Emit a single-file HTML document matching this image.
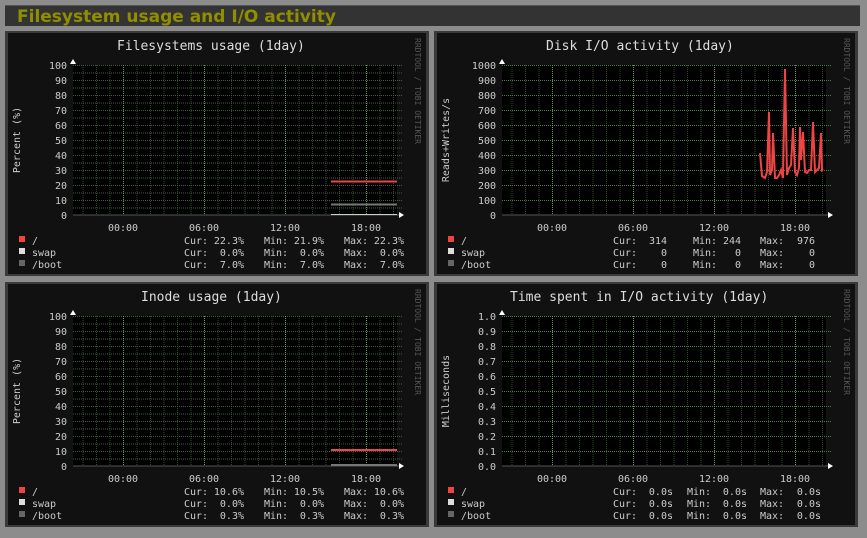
<!DOCTYPE html>
<html><head><meta charset="utf-8"><style>
html,body{margin:0;padding:0;background:#8c8c8c;}
svg{display:block;font-family:"DejaVu Sans Mono","Liberation Mono",monospace;}
</style></head><body>
<svg width="867" height="538" viewBox="0 0 867 538" xmlns="http://www.w3.org/2000/svg">
<defs>
<pattern id="vmin" patternUnits="userSpaceOnUse" x="118" y="0" width="13.5" height="2">
<rect x="0" y="0" width="1" height="1" fill="#2f4a2f"/></pattern>
<pattern id="h75" patternUnits="userSpaceOnUse" x="0" y="34" width="2" height="7.5">
<rect x="0" y="0" width="1" height="1" fill="#3f5f3f"/></pattern>
<pattern id="h15" patternUnits="userSpaceOnUse" x="0" y="34" width="2" height="15">
<rect x="0" y="0" width="1" height="1" fill="#4f7a4f"/></pattern>
<pattern id="vmaj" patternUnits="userSpaceOnUse" x="118" y="0" width="81" height="2">
<rect x="0" y="0" width="1" height="1" fill="#6a9a6a"/></pattern>
</defs>
<rect x="5" y="5" width="855" height="21" fill="#333"/>
<rect x="5" y="5" width="855" height="1" fill="#555"/>
<text x="17" y="22" font-family="'DejaVu Sans','Liberation Sans',sans-serif" font-weight="bold" font-size="17" fill="#8f8f00">Filesystem usage and I/O activity</text>

<!-- Panel 1 -->
<g transform="translate(5,31)">
<rect x="0" y="0" width="424" height="245" fill="#3a3a3a"/>
<rect x="3" y="2" width="418" height="241" fill="#111"/>
<rect x="68" y="34" width="324" height="150" fill="#000"/>
<rect x="68" y="34" width="330" height="150" fill="url(#vmin)"/>
<rect x="68" y="34" width="330" height="150" fill="url(#h75)"/>
<rect x="68" y="34" width="330" height="150" fill="url(#vmaj)"/>
<line x1="68" y1="184" x2="396" y2="184" stroke="#555"/>
<polygon points="65,33 71,33 68,28" fill="#fff"/><polygon points="394,181 394,187 399,184" fill="#fff"/>
<text x="112" y="19" font-size="13" fill="#ddd">Filesystems usage  (1day)</text>
<g font-size="10" fill="#ccc" text-anchor="end">
<text x="62" y="38">100</text><text x="62" y="53">90</text><text x="62" y="68">80</text><text x="62" y="83">70</text><text x="62" y="98">60</text><text x="62" y="113">50</text><text x="62" y="128">40</text><text x="62" y="143">30</text><text x="62" y="158">20</text><text x="62" y="173">10</text><text x="62" y="188">0</text></g>
<g font-size="10" fill="#ccc" text-anchor="middle"><text x="118" y="200">00:00</text><text x="199" y="200">06:00</text><text x="280" y="200">12:00</text><text x="361" y="200">18:00</text></g>
<text transform="translate(15,109) rotate(-90)" font-size="10" fill="#ccc" text-anchor="middle">Percent (%)</text>
<text transform="translate(410,7) rotate(90)" font-size="8" fill="#555">RRDTOOL / TOBI OETIKER</text>
<line x1="326" y1="150.5" x2="392" y2="150.5" stroke="#e44" stroke-width="2"/>
<line x1="326" y1="173.5" x2="392" y2="173.5" stroke="#777" stroke-width="2"/>
<line x1="326" y1="183.5" x2="392" y2="183.5" stroke="#ccc" stroke-width="1"/>
<rect x="14" y="205" width="6" height="6" fill="#e44"/><rect x="14" y="217" width="6" height="6" fill="#ddd"/><rect x="14" y="229" width="6" height="6" fill="#666"/>
<g font-size="10" fill="#ccc">
<text x="27" y="213">/</text><text x="27" y="225">swap</text><text x="27" y="237">/boot</text>
<text x="179" y="213">Cur:</text><text x="259" y="213">Min:</text><text x="339" y="213">Max:</text>
<text x="179" y="225">Cur:</text><text x="259" y="225">Min:</text><text x="339" y="225">Max:</text>
<text x="179" y="237">Cur:</text><text x="259" y="237">Min:</text><text x="339" y="237">Max:</text>
<g text-anchor="end"><text x="239" y="213">22.3%</text><text x="319" y="213">21.9%</text><text x="399" y="213">22.3%</text>
<text x="239" y="225">0.0%</text><text x="319" y="225">0.0%</text><text x="399" y="225">0.0%</text>
<text x="239" y="237">7.0%</text><text x="319" y="237">7.0%</text><text x="399" y="237">7.0%</text></g></g>
</g>

<!-- Panel 2 -->
<g transform="translate(434,31)">
<rect x="0" y="0" width="424" height="245" fill="#3a3a3a"/>
<rect x="3" y="2" width="418" height="241" fill="#111"/>
<rect x="68" y="34" width="324" height="150" fill="#000"/>
<rect x="68" y="34" width="330" height="150" fill="url(#vmin)"/>
<rect x="68" y="34" width="330" height="150" fill="url(#h15)"/>
<rect x="68" y="34" width="330" height="150" fill="url(#vmaj)"/>
<line x1="68" y1="184" x2="396" y2="184" stroke="#555"/>
<polygon points="65,33 71,33 68,28" fill="#fff"/><polygon points="394,181 394,187 399,184" fill="#fff"/>
<text x="112" y="19" font-size="13" fill="#ddd">Disk I/O activity  (1day)</text>
<g font-size="10" fill="#ccc" text-anchor="end">
<text x="62" y="38">1000</text><text x="62" y="53">900</text><text x="62" y="68">800</text><text x="62" y="83">700</text><text x="62" y="98">600</text><text x="62" y="113">500</text><text x="62" y="128">400</text><text x="62" y="143">300</text><text x="62" y="158">200</text><text x="62" y="173">100</text><text x="62" y="188">0</text></g>
<g font-size="10" fill="#ccc" text-anchor="middle"><text x="118" y="200">00:00</text><text x="199" y="200">06:00</text><text x="280" y="200">12:00</text><text x="361" y="200">18:00</text></g>
<text transform="translate(15,109) rotate(-90)" font-size="10" fill="#ccc" text-anchor="middle">Reads+Writes/s</text>
<text transform="translate(410,7) rotate(90)" font-size="8" fill="#555">RRDTOOL / TOBI OETIKER</text>
<polyline fill="none" stroke="#e44" stroke-width="2" points="326,122 328,145 331,147 333,141 335,81 336,144 338,139 339,102 341,147 343,147 345,144 347,139 349,147 351,38 353,144 355,137 357,134 359,97 361,141 363,144 365,137 366,96 367,129 369,101 371,141 373,142 375,139 377,139 379,91 381,141 383,139 385,137 387,102 388,139 389,138"/>
<rect x="14" y="205" width="6" height="6" fill="#e44"/><rect x="14" y="217" width="6" height="6" fill="#ddd"/><rect x="14" y="229" width="6" height="6" fill="#666"/>
<g font-size="10" fill="#ccc">
<text x="27" y="213">/</text><text x="27" y="225">swap</text><text x="27" y="237">/boot</text>
<text x="179" y="213">Cur:</text><text x="259" y="213">Min:</text><text x="326" y="213">Max:</text>
<text x="179" y="225">Cur:</text><text x="259" y="225">Min:</text><text x="326" y="225">Max:</text>
<text x="179" y="237">Cur:</text><text x="259" y="237">Min:</text><text x="326" y="237">Max:</text>
<g text-anchor="end"><text x="233" y="213">314</text><text x="307" y="213">244</text><text x="381" y="213">976</text>
<text x="233" y="225">0</text><text x="307" y="225">0</text><text x="381" y="225">0</text>
<text x="233" y="237">0</text><text x="307" y="237">0</text><text x="381" y="237">0</text></g></g>
</g>

<!-- Panel 3 -->
<g transform="translate(5,282)">
<rect x="0" y="0" width="424" height="245" fill="#3a3a3a"/>
<rect x="3" y="2" width="418" height="241" fill="#111"/>
<rect x="68" y="34" width="324" height="150" fill="#000"/>
<rect x="68" y="34" width="330" height="150" fill="url(#vmin)"/>
<rect x="68" y="34" width="330" height="150" fill="url(#h75)"/>
<rect x="68" y="34" width="330" height="150" fill="url(#vmaj)"/>
<line x1="68" y1="184" x2="396" y2="184" stroke="#555"/>
<polygon points="65,33 71,33 68,28" fill="#fff"/><polygon points="394,181 394,187 399,184" fill="#fff"/>
<text x="136" y="19" font-size="13" fill="#ddd">Inode usage  (1day)</text>
<g font-size="10" fill="#ccc" text-anchor="end">
<text x="62" y="38">100</text><text x="62" y="53">90</text><text x="62" y="68">80</text><text x="62" y="83">70</text><text x="62" y="98">60</text><text x="62" y="113">50</text><text x="62" y="128">40</text><text x="62" y="143">30</text><text x="62" y="158">20</text><text x="62" y="173">10</text><text x="62" y="188">0</text></g>
<g font-size="10" fill="#ccc" text-anchor="middle"><text x="118" y="200">00:00</text><text x="199" y="200">06:00</text><text x="280" y="200">12:00</text><text x="361" y="200">18:00</text></g>
<text transform="translate(15,109) rotate(-90)" font-size="10" fill="#ccc" text-anchor="middle">Percent (%)</text>
<text transform="translate(410,7) rotate(90)" font-size="8" fill="#555">RRDTOOL / TOBI OETIKER</text>
<line x1="326" y1="168" x2="392" y2="168" stroke="#e44" stroke-width="2"/>
<line x1="326" y1="183" x2="392" y2="183" stroke="#777" stroke-width="2"/>
<rect x="14" y="205" width="6" height="6" fill="#e44"/><rect x="14" y="217" width="6" height="6" fill="#ddd"/><rect x="14" y="229" width="6" height="6" fill="#666"/>
<g font-size="10" fill="#ccc">
<text x="27" y="213">/</text><text x="27" y="225">swap</text><text x="27" y="237">/boot</text>
<text x="179" y="213">Cur:</text><text x="259" y="213">Min:</text><text x="339" y="213">Max:</text>
<text x="179" y="225">Cur:</text><text x="259" y="225">Min:</text><text x="339" y="225">Max:</text>
<text x="179" y="237">Cur:</text><text x="259" y="237">Min:</text><text x="339" y="237">Max:</text>
<g text-anchor="end"><text x="239" y="213">10.6%</text><text x="319" y="213">10.5%</text><text x="399" y="213">10.6%</text>
<text x="239" y="225">0.0%</text><text x="319" y="225">0.0%</text><text x="399" y="225">0.0%</text>
<text x="239" y="237">0.3%</text><text x="319" y="237">0.3%</text><text x="399" y="237">0.3%</text></g></g>
</g>

<!-- Panel 4 -->
<g transform="translate(434,282)">
<rect x="0" y="0" width="424" height="245" fill="#3a3a3a"/>
<rect x="3" y="2" width="418" height="241" fill="#111"/>
<rect x="68" y="34" width="324" height="150" fill="#000"/>
<rect x="68" y="34" width="330" height="150" fill="url(#vmin)"/>
<rect x="68" y="34" width="330" height="150" fill="url(#h15)"/>
<rect x="68" y="34" width="330" height="150" fill="url(#vmaj)"/>
<line x1="68" y1="184" x2="396" y2="184" stroke="#555"/>
<polygon points="65,33 71,33 68,28" fill="#fff"/><polygon points="394,181 394,187 399,184" fill="#fff"/>
<text x="76" y="19" font-size="13" fill="#ddd">Time spent in I/O activity  (1day)</text>
<g font-size="10" fill="#ccc" text-anchor="end">
<text x="62" y="38">1.0</text><text x="62" y="53">0.9</text><text x="62" y="68">0.8</text><text x="62" y="83">0.7</text><text x="62" y="98">0.6</text><text x="62" y="113">0.5</text><text x="62" y="128">0.4</text><text x="62" y="143">0.3</text><text x="62" y="158">0.2</text><text x="62" y="173">0.1</text><text x="62" y="188">0.0</text></g>
<g font-size="10" fill="#ccc" text-anchor="middle"><text x="118" y="200">00:00</text><text x="199" y="200">06:00</text><text x="280" y="200">12:00</text><text x="361" y="200">18:00</text></g>
<text transform="translate(15,109) rotate(-90)" font-size="10" fill="#ccc" text-anchor="middle">Milliseconds</text>
<text transform="translate(410,7) rotate(90)" font-size="8" fill="#555">RRDTOOL / TOBI OETIKER</text>
<rect x="14" y="205" width="6" height="6" fill="#e44"/><rect x="14" y="217" width="6" height="6" fill="#ddd"/><rect x="14" y="229" width="6" height="6" fill="#666"/>
<g font-size="10" fill="#ccc">
<text x="27" y="213">/</text><text x="27" y="225">swap</text><text x="27" y="237">/boot</text>
<text x="179" y="213">Cur:</text><text x="253" y="213">Min:</text><text x="326" y="213">Max:</text>
<text x="179" y="225">Cur:</text><text x="253" y="225">Min:</text><text x="326" y="225">Max:</text>
<text x="179" y="237">Cur:</text><text x="253" y="237">Min:</text><text x="326" y="237">Max:</text>
<g text-anchor="end"><text x="239" y="213">0.0s</text><text x="313" y="213">0.0s</text><text x="387" y="213">0.0s</text>
<text x="239" y="225">0.0s</text><text x="313" y="225">0.0s</text><text x="387" y="225">0.0s</text>
<text x="239" y="237">0.0s</text><text x="313" y="237">0.0s</text><text x="387" y="237">0.0s</text></g></g>
</g>
</svg>
</body></html>
